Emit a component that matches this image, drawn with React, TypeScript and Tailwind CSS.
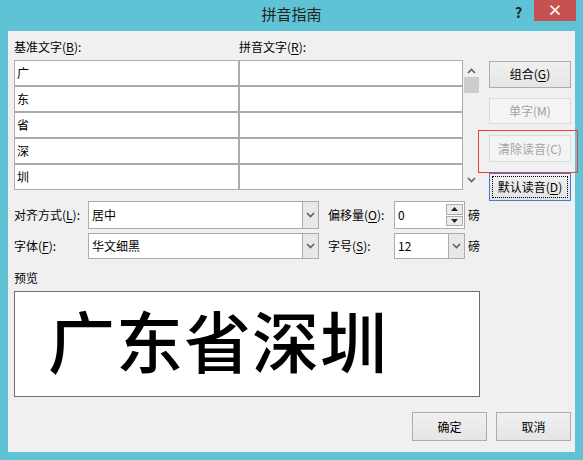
import type { ReactNode } from "react";

const font = { fontFamily: '"Noto Sans CJK SC", "Noto Sans", sans-serif' };

function Btn({
  children,
  disabled,
  focused,
  className = ""
}: {
  children: ReactNode;
  disabled?: boolean;
  focused?: boolean;
  className?: string;
}) {
  if (disabled) {
    return (
      <div className={`flex h-[28px] w-[82px] items-center justify-center border border-[#d9d9d9] bg-[#f4f4f4] text-[12px] text-[#a3a3a3] ${className}`}>
        {children}
      </div>
    );
  }
  if (focused) {
    return (
      <div className={`flex h-[29px] w-[82px] items-center justify-center border border-[#3c7fd6] bg-gradient-to-b from-[#f2f2f2] to-[#e3e3e3] p-[2px] ${className}`}>
        <div className="flex h-full w-full items-center justify-center border border-dotted border-black text-[12px] text-black">
          {children}
        </div>
      </div>
    );
  }
  return (
    <div className={`flex h-[28px] w-[82px] items-center justify-center border border-[#acacac] bg-gradient-to-b from-[#f0f0f0] to-[#e5e5e5] text-[12px] text-black ${className}`}>
      {children}
    </div>
  );
}

function Chevron({ up }: { up?: boolean }) {
  return (
    <svg width="9" height="6" viewBox="0 0 9 6">
      <path
        d={up ? "M1 5 L4.5 1.5 L8 5" : "M1 1 L4.5 4.5 L8 1"}
        fill="none"
        stroke="#606060"
        strokeWidth="1.6"
      />
    </svg>
  );
}

function Combo({ value, width }: { value: string; width: string }) {
  return (
    <div className={`flex h-full ${width} border border-[#acacac] bg-white`}>
      <div className="flex flex-1 items-center pl-[3px] text-[12px] text-black">{value}</div>
      <div className="flex w-[16px] items-center justify-center border-l border-[#acacac] bg-[#e8e8e8]">
        <Chevron />
      </div>
    </div>
  );
}

const U = ({ c }: { c: string }) => <span className="underline underline-offset-2">{c}</span>;

export default function App() {
  const chars = ["广", "东", "省", "深", "圳"];
  return (
    <div className="relative flex h-[460px] w-[583px] flex-col bg-[#5fc3d5]" style={font}>
      {/* title bar */}
      <div className="relative flex h-[31px] items-center justify-center">
        <span className="pb-[3px] text-[15px] text-[#222]">拼音指南</span>
        <span className="absolute left-[515px] top-[2px] text-[14px] font-bold text-[#222]">?</span>
        <div className="absolute left-[534px] top-0 flex h-[21px] w-[42px] items-center justify-center bg-[#c75050] text-[15px] font-bold text-white">
          ×
        </div>
      </div>

      {/* client */}
      <div className="mx-[8px] flex h-[421px] flex-col bg-[#f0f0f0] pl-[6px] text-[12px] text-black">
        <div className="flex h-[170px]">
          <div className="flex w-[466px] flex-col">
            <div className="flex h-[22px] items-center pt-[9px]">
              <span className="w-[225px]">
                基准文字(<U c="B" />):
              </span>
              <span>
                拼音文字(<U c="R" />):
              </span>
            </div>
            <div className="mt-[7px] flex">
              <div className="flex w-[449px] flex-col">
                {chars.map((ch) => (
                  <div key={ch} className="flex h-[26px]">
                    <div className="flex w-[225px] items-center border border-[#ababab] bg-white pl-[2px]">{ch}</div>
                    <div className="flex-1 border border-[#ababab] bg-white" />
                  </div>
                ))}
              </div>
              <div className="flex w-[17px] flex-col items-center">
                <div className="flex h-[17px] items-center justify-center pt-[4px]">
                  <Chevron up />
                </div>
                <div className="h-[16px] w-[15px] bg-[#cdcdcd]" />
                <div className="flex-1" />
                <div className="flex h-[17px] items-center justify-center pb-[4px]">
                  <Chevron />
                </div>
              </div>
            </div>
          </div>
          <div className="ml-[9px] flex flex-col pt-[30px]">
            <Btn>
              组合(<U c="G" />)
            </Btn>
            <Btn disabled className="mt-[10px]">
              单字(M)
            </Btn>
            <Btn disabled className="mt-[11px]">
              清除读音(C)
            </Btn>
            <Btn focused className="mt-[11px]">
              默认读音(<U c="D" />)
            </Btn>
          </div>
        </div>

        {/* options */}
        <div className="flex h-[28px] items-center">
          <span className="w-[74px]">
            对齐方式(<U c="L" />):
          </span>
          <Combo value="居中" width="w-[231px]" />
          <span className="ml-[9px] w-[66px]">
            偏移量(<U c="O" />):
          </span>
          <div className="flex h-full w-[71px] border border-[#acacac] bg-white">
            <div className="flex flex-1 items-center pl-[3px]">0</div>
            <div className="flex w-[18px] flex-col justify-center gap-[1px] py-[2px] pr-[1px]">
              <div className="flex flex-1 items-center justify-center border border-[#acacac] bg-[#ececec]">
                <svg width="7" height="4" viewBox="0 0 7 4"><path d="M0 4 L3.5 0 L7 4Z" fill="#222" /></svg>
              </div>
              <div className="flex flex-1 items-center justify-center border border-[#acacac] bg-[#ececec]">
                <svg width="7" height="4" viewBox="0 0 7 4"><path d="M0 0 L3.5 4 L7 0Z" fill="#222" /></svg>
              </div>
            </div>
          </div>
          <span className="ml-[3px]">磅</span>
        </div>
        <div className="mt-[4px] flex h-[26px] items-center">
          <span className="w-[74px]">
            字体(<U c="F" />):
          </span>
          <Combo value="华文细黑" width="w-[231px]" />
          <span className="ml-[9px] w-[66px]">
            字号(<U c="S" />):
          </span>
          <Combo value="12" width="w-[71px]" />
          <span className="ml-[3px]">磅</span>
        </div>

        <div className="mt-[10px] h-[18px] leading-[18px]">预览</div>
        <div className="mt-[4px] flex h-[106px] w-[466px] items-center border border-[#6e6e6e] bg-white pb-[12px] pl-[33px]">
          <span className="text-[67px] font-medium leading-none tracking-[1px] text-black">广东省深圳</span>
        </div>

        <div className="mt-[15px] flex justify-end gap-[9px] pr-[4px]">
          <Btn className="!w-[75px] !h-[29px]">确定</Btn>
          <Btn className="!w-[75px] !h-[29px]">取消</Btn>
        </div>
      </div>

      {/* highlight frame */}
      <div className="absolute left-[478px] top-[130px] h-[43px] w-[100px] border border-[#e8403f]" />
    </div>
  );
}
